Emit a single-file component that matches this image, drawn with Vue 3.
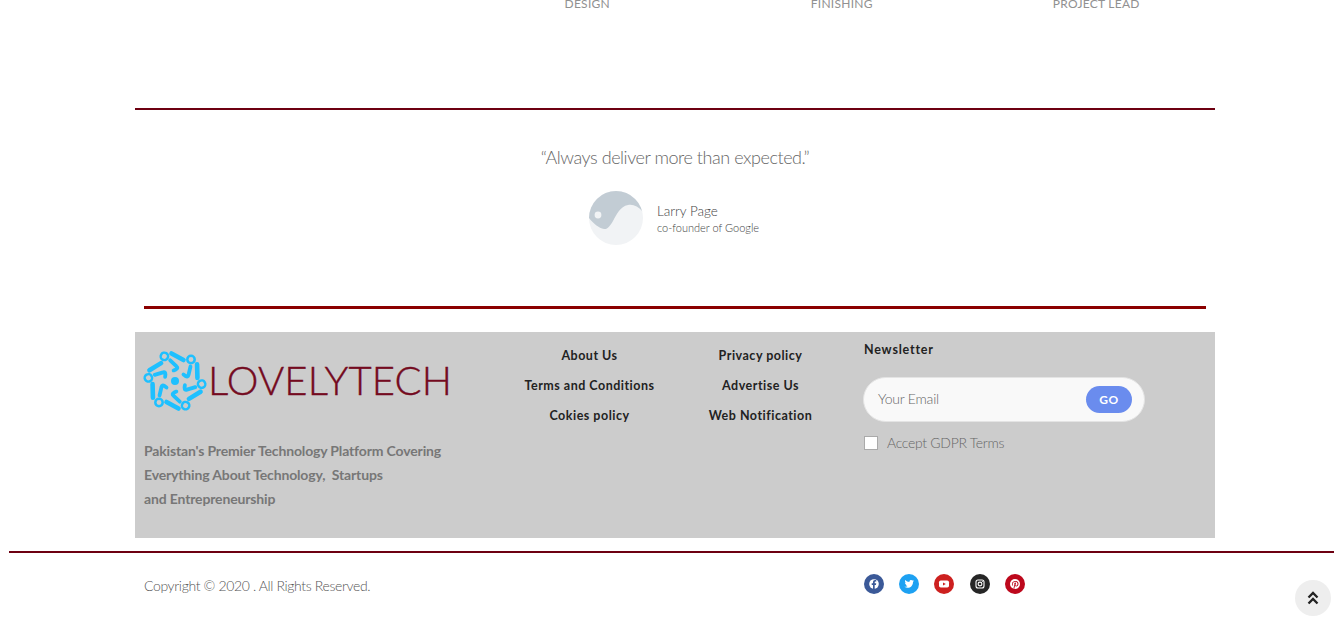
<template>
  <div class="page">
    <!-- roles strip, cut off by the top of the view -->
    <div class="roles">
      <span v-for="r in roles" :key="r" class="role">{{ r }}</span>
    </div>

    <div class="rule rule-top"></div>

    <!-- quote -->
    <section class="quote">
      <p class="quote-text">“Always deliver more than expected.”</p>
      <div class="author">
        <svg class="avatar" width="54" height="54" viewBox="0 0 54 54">
          <defs>
            <clipPath id="avatarClip"><circle cx="27" cy="27" r="27" /></clipPath>
          </defs>
          <circle cx="27" cy="27" r="27" fill="#f1f3f5" />
          <path clip-path="url(#avatarClip)" fill="#c2ccd4" d="M0 0H54V21C49 15 44 13 39 14C31 15.500 28 23 24 30C21 35 18.500 38.500 15 38C10 37.500 4 32 0 27Z" />
          <circle cx="9" cy="24" r="3.400" fill="#f1f3f5" />
        </svg>
        <div class="author-info">
          <div class="author-name">Larry Page</div>
          <div class="author-role">co-founder of Google</div>
        </div>
      </div>
    </section>

    <div class="rule rule-mid"></div>

    <!-- footer -->
    <footer class="footer">
      <div class="brand">
        <div class="logo">
          <svg width="64" height="62" viewBox="-32 -31 64 62" class="logo-mark">
            <g v-for="a in arms" :key="a" :transform="`rotate(${a})`" fill="none" stroke="#1ec0ff" stroke-linecap="round" stroke-linejoin="round">
              <circle cx="16" cy="-21.500" r="3.700" stroke-width="2.500" />
              <path stroke-width="3.800" d="M15.500 -14.500L13.500 -6Q13 -3.500 10.500 -5L8.500 -6.500" />
              <path stroke-width="4.600" d="M-3.500 -27.500L8.500 -21" />
            </g>
            <circle r="4" fill="#1ec0ff" />
          </svg>
          <span class="logo-text">LOVELYTECH</span>
        </div>
        <p class="tagline">
          Pakistan's Premier Technology Platform Covering<br />
          Everything About Technology,&nbsp; Startups<br />
          and Entrepreneurship
        </p>
      </div>

      <ul class="links">
        <li v-for="l in linksA" :key="l">{{ l }}</li>
      </ul>
      <ul class="links">
        <li v-for="l in linksB" :key="l">{{ l }}</li>
      </ul>

      <div class="newsletter">
        <h4>Newsletter</h4>
        <div class="email-box">
          <span class="placeholder">Your Email</span>
          <button class="go-btn">GO</button>
        </div>
        <label class="gdpr">
          <span class="check"></span>
          Accept GDPR Terms
        </label>
      </div>
    </footer>

    <div class="rule rule-bottom"></div>

    <div class="copy-row">
      <span class="copy">Copyright © 2020 . All Rights Reserved.</span>
      <div class="socials">
        <span class="social fb">
          <svg width="20" height="20" viewBox="0 0 20 20">
            <circle cx="10" cy="10" r="4.800" fill="#fff" />
            <path fill="#3b5998" d="M10.700 15V10.900H12L12.200 9.300H10.700V8.400C10.700 7.900 10.900 7.600 11.500 7.600H12.300V6.200C12 6.100 11.500 6.100 11 6.100C9.800 6.100 9 6.800 9 8.200V9.300H7.700V10.900H9V15Z" />
          </svg>
        </span>
        <span class="social tw">
          <svg width="20" height="20" viewBox="0 0 20 20">
            <path fill="#fff" d="M15 6.900C14.600 7.100 14.300 7.200 13.800 7.200C14.200 7 14.600 6.600 14.700 6.100C14.300 6.300 13.900 6.500 13.400 6.600C12.500 5.600 10.400 6.100 10.400 7.700C10.400 7.900 10.400 8 10.400 8.100C8.800 8 7.300 7.300 6.200 6.100C5.700 7 6 8.200 6.800 8.700C6.500 8.700 6.200 8.600 5.900 8.500C5.900 9.500 6.600 10.300 7.500 10.500C7.200 10.600 6.900 10.600 6.600 10.500C6.900 11.300 7.600 11.900 8.500 11.900C7.600 12.600 6.500 12.900 5.400 12.800C9.700 15.400 14.100 12.400 14 7.900C14.400 7.700 14.700 7.300 15 6.900Z" />
          </svg>
        </span>
        <span class="social yt">
          <svg width="20" height="20" viewBox="0 0 20 20">
            <rect x="5" y="6.500" width="10" height="7" rx="1.800" fill="#fff" />
            <path fill="#cd201f" d="M9 8.500L11.800 10L9 11.500Z" />
          </svg>
        </span>
        <span class="social ig">
          <svg width="20" height="20" viewBox="0 0 20 20" fill="none" stroke="#fff">
            <rect x="6" y="6" width="8" height="8" rx="2" stroke-width="1.100" />
            <circle cx="10" cy="10" r="1.900" stroke-width="1.100" />
            <circle cx="12.400" cy="7.600" r=".5" fill="#fff" stroke="none" />
          </svg>
        </span>
        <span class="social pin">
          <svg width="20" height="20" viewBox="0 0 20 20">
            <circle cx="10" cy="10" r="5" fill="#fff" />
            <path fill="#bd081c" d="M9.200 15L10 11.800C10.200 12.200 10.700 12.500 11.200 12.500C12.600 12.500 13.500 11.200 13.500 9.700C13.500 8.200 12.200 7 10.400 7C8.300 7 6.900 8.400 6.900 10C6.900 10.800 7.200 11.500 7.900 11.800L8.200 11.200C7.800 10.800 7.700 10.500 7.700 10C7.700 8.800 8.700 7.800 10.200 7.800C11.600 7.800 12.500 8.600 12.500 9.700C12.500 10.800 12 11.700 11.200 11.700C10.700 11.700 10.400 11.300 10.500 10.900L11 9.300C11 8.800 10.800 8.400 10.300 8.400C9.700 8.400 9.300 9 9.300 9.700C9.300 10.100 9.400 10.400 9.400 10.400L8.500 14.200Z" />
          </svg>
        </span>
      </div>
    </div>

    <!-- back to top -->
    <button class="to-top" aria-label="Back to top">
      <svg width="12" height="14" viewBox="0 0 12 14" fill="none" stroke="#222" stroke-width="2.300">
        <path d="M1.500 6.500L6 2L10.500 6.500" />
        <path d="M1.500 12.500L6 8L10.500 12.500" />
      </svg>
    </button>
  </div>
</template>

<script setup>
const roles = ['Design', 'Finishing', 'Project Lead']
const arms = [0, 60, 120, 180, 240, 300]
const linksA = ['About Us', 'Terms and Conditions', 'Cokies policy']
const linksB = ['Privacy policy', 'Advertise Us', 'Web Notification']
</script>

<style>
html, body {
  margin: 0;
  background: #fff;
  overflow: hidden;
}
</style>

<style scoped>
.page {
  position: relative;
  height: 629px;
  overflow: hidden;
  font-family: 'Lato', 'Liberation Sans', sans-serif;
}

/* roles */
.roles {
  display: grid;
  grid-template-columns: repeat(3, 254.5px);
  margin-left: 460px;
  height: 8px;
  margin-bottom: 100px;
}
.role {
  text-align: center;
  font-size: 12px;
  line-height: 8px;
  letter-spacing: 0.25px;
  text-transform: uppercase;
  color: #919191;
}

/* lines */
.rule-top {
  height: 2px;
  margin: 0 119px 0 135px;
  background: #6d0011;
}
.rule-mid {
  height: 3px;
  margin: 0 128px 23px 144px;
  background: #8b0000;
}
.rule-bottom {
  height: 2px;
  margin: 13px 0 0 9px;
  background: #6d0011;
}

/* quote */
.quote {
  width: 1080px;
  margin-left: 135px;
  height: 196px;
  padding-top: 35px;
  box-sizing: border-box;
}
.quote-text {
  margin: 0 0 22px;
  text-align: center;
  font-size: 18px;
  line-height: 24px;
  font-weight: 300;
  letter-spacing: -0.45px;
  color: #666;
}
.author {
  display: flex;
  align-items: center;
  justify-content: center;
  gap: 14px;
  margin-left: -2px;
}
.avatar {
  display: block;
}
.author-info {
  padding-top: 2px;
}
.author-name {
  font-size: 13.500px;
  line-height: 17px;
  font-weight: 300;
  color: #444;
}
.author-role {
  font-size: 11px;
  line-height: 15px;
  font-weight: 300;
  color: #444;
}

/* footer */
.footer {
  display: grid;
  grid-template-columns: 369px 171px 171px 1fr;
  width: 1080px;
  height: 206px;
  margin-left: 135px;
  background: #ccc;
}
.brand {
  padding: 18px 0 0 9px;
}
.logo {
  display: flex;
  align-items: center;
  margin-left: -1px;
  gap: 1px;
  height: 62px;
}
.logo-mark {
  display: block;
}
.logo-text {
  font-size: 40px;
  line-height: 58px;
  margin-bottom: 3px;
  font-weight: 300;
  color: #740a20;
  letter-spacing: 0.2px;
  -webkit-text-stroke: 0.4px #740a20;
}
.tagline {
  margin: 27px 0 0;
  font-size: 14px;
  line-height: 24px;
  font-weight: 700;
  letter-spacing: -0.15px;
  color: #777;
}
.links {
  list-style: none;
  margin: 0;
  padding: 8.500px 0 0;
  text-align: center;
}
.links li {
  font-size: 12.500px;
  line-height: 30px;
  font-weight: 700;
  letter-spacing: 0.5px;
  color: #222;
}
.newsletter {
  padding: 10px 0 0 18px;
}
.newsletter h4 {
  margin: 0 0 19px;
  font-size: 12.500px;
  line-height: 16px;
  font-weight: 700;
  letter-spacing: 0.8px;
  color: #222;
}
.email-box {
  display: flex;
  align-items: center;
  justify-content: space-between;
  box-sizing: border-box;
  width: 282px;
  height: 45px;
  margin-left: -1px;
  padding: 0 12px 0 14px;
  background: #f9f9f9;
  border: 1px solid #e4e4e4;
  border-radius: 23px;
}
.placeholder {
  margin-bottom: 2px;
  font-size: 14px;
  font-weight: 300;
  letter-spacing: -0.2px;
  color: #666;
}
.go-btn {
  width: 46px;
  height: 27px;
  padding: 0;
  border: none;
  border-radius: 14px;
  background: #6a8cee;
  color: #fff;
  font-family: inherit;
  font-size: 12px;
  font-weight: 700;
  letter-spacing: 0.5px;
}
.gdpr {
  display: flex;
  align-items: center;
  gap: 9px;
  margin-top: 12px;
  font-size: 14px;
  line-height: 17px;
  font-weight: 300;
  letter-spacing: -0.3px;
  color: #666;
}
.check {
  box-sizing: border-box;
  width: 14px;
  height: 14px;
  background: #fff;
  border: 1px solid #aaa;
}

/* bottom row */
.copy-row {
  display: flex;
  width: 1071px;
  margin-left: 144px;
  padding-top: 21px;
}
.copy {
  width: 720px;
  font-size: 14px;
  line-height: 24px;
  font-weight: 300;
  letter-spacing: -0.36px;
  color: #555;
}
.socials {
  display: flex;
  gap: 15.200px;
}
.social {
  display: block;
  width: 20px;
  height: 20px;
  border-radius: 50%;
  overflow: hidden;
}
.social svg {
  display: block;
}
.fb { background: #3b5998; }
.tw { background: #1da1f2; }
.yt { background: #cd201f; }
.ig { background: #262626; }
.pin { background: #bd081c; }

.to-top {
  position: absolute;
  left: 1295px;
  top: 580px;
  width: 36px;
  height: 36px;
  padding: 0;
  display: flex;
  align-items: center;
  justify-content: center;
  border: none;
  border-radius: 50%;
  background: #eee;
}
</style>
